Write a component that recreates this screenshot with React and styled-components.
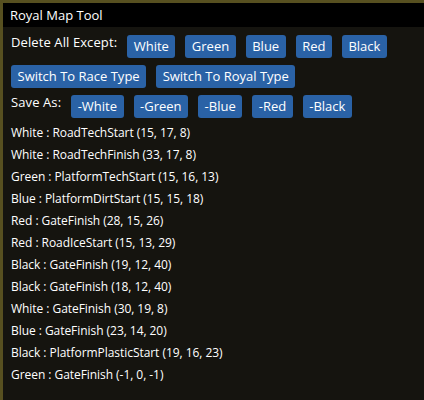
import React from "react";
import styled, { createGlobalStyle } from "styled-components";

const Global = createGlobalStyle`
  html, body { margin: 0; padding: 0; }
  body {
    width: 424px;
    height: 400px;
    overflow: hidden;
    background: #575020;
    font-family: "Open Sans", "Noto Sans", sans-serif;
  }
`;

const Window = styled.div`
  margin: 3px 0 0 3px;
  width: 430px;
  height: 410px;
  background: #15140f;
  color: #ffffff;
  display: flex;
  flex-direction: column;
`;

const TitleBar = styled.div`
  height: 24px;
  background: #000000;
  display: flex;
  align-items: center;
  padding-left: 7px;
  font-size: 13px;
`;

const Body = styled.div`
  padding: 8px 8px;
  display: flex;
  flex-direction: column;
  font-size: 13px;
`;

const Row = styled.div`
  display: flex;
  align-items: center;
  gap: 10px;
  height: 23px;
  margin-bottom: 7px;
`;

const Label = styled.span`
  line-height: 23px;
  letter-spacing: 0.1px;
  position: relative;
  top: -4px;
`;

const Button = styled.button`
  height: 23px;
  padding: 0 6.5px;
  border: none;
  border-radius: 3px;
  background: #2a62a6;
  color: #ffffff;
  font-family: inherit;
  font-size: 13px;
  line-height: 23px;
`;

const List = styled.div`
  display: flex;
  flex-direction: column;
  margin-top: -3px;
  font-size: 12px;
  letter-spacing: -0.05px;
`;

const Line = styled.div`
  height: 22px;
  line-height: 22px;
  white-space: nowrap;
`;

const colors = ["White", "Green", "Blue", "Red", "Black"];
const lines = [
  "White : RoadTechStart (15, 17, 8)",
  "White : RoadTechFinish (33, 17, 8)",
  "Green : PlatformTechStart (15, 16, 13)",
  "Blue : PlatformDirtStart (15, 15, 18)",
  "Red : GateFinish (28, 15, 26)",
  "Red : RoadIceStart (15, 13, 29)",
  "Black : GateFinish (19, 12, 40)",
  "Black : GateFinish (18, 12, 40)",
  "White : GateFinish (30, 19, 8)",
  "Blue : GateFinish (23, 14, 20)",
  "Black : PlatformPlasticStart (19, 16, 23)",
  "Green : GateFinish (-1, 0, -1)",
];

export default function App() {
  return (
    <>
      <Global />
      <Window>
        <TitleBar>Royal Map Tool</TitleBar>
        <Body>
          <Row>
            <Label>Delete All Except:</Label>
            {colors.map((c) => (
              <Button key={c}>{c}</Button>
            ))}
          </Row>
          <Row>
            <Button>Switch To Race Type</Button>
            <Button>Switch To Royal Type</Button>
          </Row>
          <Row>
            <Label>Save As:</Label>
            {colors.map((c) => (
              <Button key={c}>-{c}</Button>
            ))}
          </Row>
          <List>
            {lines.map((l, i) => (
              <Line key={i}>{l}</Line>
            ))}
          </List>
        </Body>
      </Window>
    </>
  );
}
